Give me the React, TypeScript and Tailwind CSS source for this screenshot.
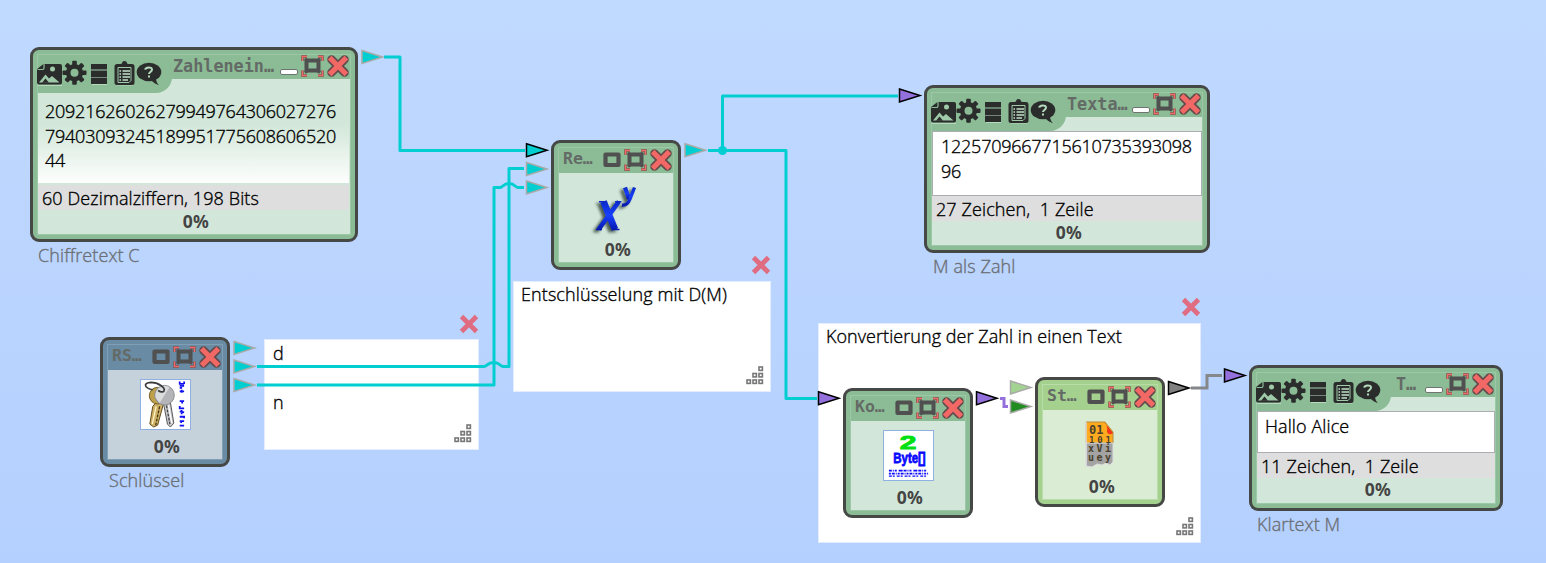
import React from "react";

type Tone = "green" | "blue" | "lime";

const shell: Record<Tone, string> = {
  green: "bg-[#8bbc95]",
  blue: "bg-[#698ba4]",
  lime: "bg-[#a5d18f]",
};
const inner: Record<Tone, string> = {
  green: "bg-[#d2e7d9]",
  blue: "bg-[#c6d2db]",
  lime: "bg-[#dbecd5]",
};
const rim: Record<Tone, string> = {
  green: "border-[#9bc9a6]",
  blue: "border-[#7f9fb6]",
  lime: "border-[#b9dda9]",
};

const UI = "font-['Open_Sans','Noto_Sans',sans-serif] font-light [-webkit-text-stroke:0.35px]";
const MONO = "font-['DejaVu_Sans_Mono',monospace]";
const PROSE = "text-[18px] tracking-[0.1px]";
const DIGITS = "text-[18px] tracking-[-0.24px]";

function FrameIcon() {
  return (
    <svg className="h-[22px] w-[23px] shrink-0" viewBox="0 0 23 22">
      <rect x="5.500" y="5.500" width="12" height="10" fill="none" stroke="#505050" strokeWidth="4" />
      <path d="M4 4l3 2M19 4l-3 2M4 17.500l3-2M19 17.500l-3-2" stroke="#505050" strokeWidth="3" />
      <path d="M1.500 6V1.500H6M17 1.500H21.500V6M1.500 15.500V20.500H6M17 20.500H21.500V15.500" fill="none" stroke="#7a4a4a" strokeWidth="2.400" />
      <path d="M1.500 6V1.500H6M17 1.500H21.500V6M1.500 15.500V20.500H6M17 20.500H21.500V15.500" fill="none" stroke="#f06a66" strokeWidth="1.300" />
    </svg>
  );
}

function CloseIcon() {
  return (
    <svg className="h-[22px] w-[22px] shrink-0" viewBox="0 0 22 22">
      <path d="M4.500 4.500L17.500 17.500M17.500 4.500L4.500 17.500" stroke="#634a4c" strokeWidth="8.500" strokeLinejoin="round" strokeLinecap="round" />
      <path d="M4.500 4.500L17.500 17.500M17.500 4.500L4.500 17.500" stroke="#f26865" strokeWidth="5.200" strokeLinecap="square" />
    </svg>
  );
}

function RestoreIcon() {
  return (
    <svg className="h-[16px] w-[18px] shrink-0" viewBox="0 0 18 16">
      <rect x="2.500" y="2.500" width="13" height="10.500" fill="none" stroke="#505050" strokeWidth="4.200" strokeLinejoin="round" />
    </svg>
  );
}

function ToolIcons() {
  return (
    <svg className="-ml-px h-[26px] w-[126px] shrink-0" viewBox="0 0 126 26">
      <g fill="none" stroke="#b6d8bd" strokeWidth="1" transform="translate(0 1)">
        <path d="M1 24.500H25M55 23.500H70M80 25H96" />
      </g>
      <path d="M0 9L6.500 4H23a2 2 0 0 1 2 2V22.500a2 2 0 0 1-2 2H2a2 2 0 0 1-2-2Z" fill="#2b2d2c" />
      <path d="M0.500 9.500H5.500a1.500 1.500 0 0 0 1.500-1.500V3.500" fill="none" stroke="#8bbc95" strokeWidth="1.200" />
      <circle cx="15.500" cy="9" r="2.500" fill="#9fc9a8" />
      <path d="M2 22.500L8.500 14.500 12 18.500 15 16 22.500 22.500Z" fill="#9fcaa9" />
      <path d="M5 22.800L8.500 18.500 12 22.800Z" fill="#2b2d2c" />
      <g transform="translate(37.500 12.700)" fill="#2b2d2c">
        {[0, 45, 90, 135, 180, 225, 270, 315].map((a) => (
          <rect key={a} x="-2.300" y="-12" width="4.600" height="7" rx="1" transform={`rotate(${a})`} />
        ))}
        <circle r="8.600" />
        <circle r="4" fill="#8bbc95" />
      </g>
      <path d="M54 4H70V9.500H54ZM54 10.500H70V17H54ZM54 18H70V24H54Z" fill="#2b2d2c" />
      <path d="M54 10H70M54 17.500H70" stroke="#72877a" strokeWidth="1" />
      <rect x="77.500" y="4" width="20" height="21" rx="2.500" fill="#2b2d2c" />
      <path d="M82 5.500V4.500L85 3.500a2.500 2.500 0 0 1 5 0L93 4.500V5.500Z" fill="#2b2d2c" />
      <path d="M81 7.500H94V20.500L92 22.500H81Z" fill="none" stroke="#9fcaa9" strokeWidth="1" />
      <path d="M82.500 11H84M85.500 11H93M82.500 14H84M85.500 14H93M82.500 17H84M85.500 17H93M82.500 20H84M85.500 20H91" stroke="#c2e0c9" strokeWidth="1.500" />
      <ellipse cx="112" cy="12" rx="12.300" ry="9.300" fill="#2b2d2c" />
      <path d="M111 19C115 20 117 24 122 25C119 22 119 20 119.500 17Z" fill="#2b2d2c" />
      <path d="M108.200 9.700C108.500 6.800 115 6.500 115 9.500C115 11.800 112 12 112 14M112 15.500V17.500" fill="none" stroke="#b5d9bd" strokeWidth="2" />
    </svg>
  );
}

function Percent({ className = "" }: { className?: string }) {
  return (
    <div className={`pl-[4px] text-center font-['Noto_Sans',sans-serif] text-[17.5px] leading-[23px] font-bold tracking-[0.3px] text-[#444] ${className}`}>0%</div>
  );
}

function SmallNode({ pos, tone, title, children }: { pos: string; tone: Tone; title: string; children: React.ReactNode }) {
  return (
    <section className={`absolute h-[130px] w-[130px] rounded-[9px] border-[3px] border-[#464846] p-[4px] ${shell[tone]} ${pos}`}>
      <div className={`flex h-full flex-col border ${rim[tone]}`}>
        <header className={`flex h-[25px] shrink-0 items-start ${shell[tone]}`}>
          <span className={`w-[44px] shrink-0 pl-[4px] pt-px ${MONO} text-[16.5px] leading-[20px] font-bold whitespace-nowrap text-[#646a66]`}>{title}</span>
          <span className="mt-[4px] flex"><RestoreIcon /></span>
          <span className="mt-px ml-[3px] flex gap-[3px]"><FrameIcon /><CloseIcon /></span>
        </header>
        <div className={`flex flex-1 flex-col items-center ${inner[tone]}`}>
          <div className="flex h-[66px] items-center justify-center pt-px">{children}</div>
          <Percent className="-mt-px" />
        </div>
      </div>
    </section>
  );
}

function WideNode({ pos, title, titleW, children }: { pos: string; title: string; titleW: string; children: React.ReactNode }) {
  return (
    <section className={`absolute rounded-[9px] border-[3px] border-[#464846] bg-[#8bbc95] p-[4px] ${pos}`}>
      <div className="flex h-full flex-col border border-[#9bc9a6] bg-[#d2e7d9]">
        <header className="flex h-[38px] shrink-0 items-start bg-[linear-gradient(#8bbc95_24px,#d2e7d9_24px)]">
          <div className="h-[38px] w-[134px] shrink-0 rounded-br-[16px] bg-[#8bbc95] pt-[5px]"><ToolIcons /></div>
          <span className={`shrink-0 ${titleW} ${MONO} text-[16.8px] leading-[22px] font-bold whitespace-nowrap text-[#646a66]`}>{title}</span>
          <div className="mr-px ml-auto flex">
            <span className="mt-[14px] mr-[3px] h-[6px] w-[18px] rounded-[2px] border border-[#6f7470] bg-white" />
            <span className="flex gap-[3px]"><FrameIcon /><CloseIcon /></span>
          </div>
        </header>
        {children}
      </div>
    </section>
  );
}

function StatusBar({ text, className = "" }: { text: string; className?: string }) {
  return (
    <div className={`h-[25px] shrink-0 bg-[#dedede] pl-[4px] ${UI} ${PROSE} leading-[27px] whitespace-pre text-black ${className}`}>{text}</div>
  );
}

function Note({ pos, children }: { pos: string; children: React.ReactNode }) {
  return (
    <section className={`absolute flex flex-col border border-[#e3edff] bg-white px-[7px] ${UI} ${PROSE} leading-[25px] text-black ${pos}`}>
      {children}
      <svg className="mt-auto mr-[-1px] mb-[6px] h-[19px] w-[18px] self-end" viewBox="0 0 18 19" fill="white" stroke="#777" strokeWidth="1.600">
        {[[13, 1], [7, 7.5], [13, 7.5], [1, 14], [7, 14], [13, 14]].map(([x, y]) => (
          <rect key={`${x}-${y}`} x={x} y={y} width="3.400" height="3.400" />
        ))}
      </svg>
    </section>
  );
}

function NoteClose({ pos }: { pos: string }) {
  return (
    <svg className={`absolute h-[20px] w-[20px] ${pos}`} viewBox="0 0 20 20">
      <path d="M2.500 2.500L17.500 17.500M17.500 2.500L2.500 17.500" stroke="#e06c82" strokeWidth="4.800" />
    </svg>
  );
}

function Caption({ pos, text }: { pos: string; text: string }) {
  return <div className={`absolute ${UI} ${PROSE} leading-[24px] whitespace-nowrap text-[#6b6f75] ${pos}`}>{text}</div>;
}

function Port({ x, y, fill, stroke }: { x: number; y: number; fill: string; stroke: string }) {
  return <path d={`M${x} ${y - 6.500}L${x + 20.500} ${y}L${x} ${y + 6.500}Z`} fill={fill} stroke={stroke} strokeWidth="1.500" />;
}

function Wires() {
  const teal = "#00ced1";
  const edge = "#a9aaa8";
  return (
    <svg className="pointer-events-none absolute inset-0 h-[563px] w-[1546px]" viewBox="0 0 1546 563" fill="none">
      <g stroke={teal} strokeWidth="3" strokeLinejoin="round">
        <path d="M384 57H400V150.500H525" />
        <path d="M257 366.500H484C487 366.500 487 362.500 494 362.500C500 362.500 500 366.500 503 366.500H509V168.500H524" />
        <path d="M257 385H494V187.500H500C503 187.500 503 183.500 509 183.500C515 183.500 515 187.500 518 187.500H524" />
        <path d="M708 150.500H786V398.500H817" />
        <path d="M722.500 150.500V96H898" />
      </g>
      <circle cx="722.500" cy="150.500" r="4.500" fill={teal} />
      <path d="M1000 398.500H1004V406.500H1008" stroke="#9370db" strokeWidth="3" />
      <path d="M1191 388H1207V375.500H1222" stroke="#85878a" strokeWidth="3" />
      <Port x={362} y={57} fill={teal} stroke={edge} />
      <Port x={526.500} y={150.300} fill={teal} stroke="#000" />
      <Port x={526.500} y={169} fill={teal} stroke={edge} />
      <Port x={526.500} y={187.500} fill={teal} stroke={edge} />
      <Port x={234} y={348} fill={teal} stroke={edge} />
      <Port x={234} y={366.500} fill={teal} stroke={edge} />
      <Port x={234} y={385} fill={teal} stroke={edge} />
      <Port x={685} y={150.300} fill={teal} stroke={edge} />
      <Port x={899.500} y={95.500} fill="#9370db" stroke="#000" />
      <Port x={818.500} y={398.300} fill="#9370db" stroke="#000" />
      <Port x={976.500} y={398.300} fill="#9370db" stroke="#000" />
      <Port x={1010.500} y={387.500} fill="#a3d391" stroke={edge} />
      <Port x={1010.500} y={406.500} fill="#228b22" stroke={edge} />
      <Port x={1168.500} y={388} fill="#808080" stroke="#000" />
      <Port x={1224.500} y={375.500} fill="#9370db" stroke="#000" />
    </svg>
  );
}

function KeysIcon() {
  return (
    <svg className="mt-[2px] h-[51px] w-[51px] border border-[#8fb0e0] bg-white" viewBox="0 0 50 50">
      <path d="M17 21L23 24 17 46 13 48 9 45 12 27Z" fill="#cfb266" stroke="#5f4b1b" strokeWidth="1" />
      <path d="M15.500 27L11.500 45" stroke="#fff3c8" strokeWidth="1.300" />
      <path d="M19 27L15 46" stroke="#4a3b18" strokeWidth="1.400" strokeDasharray="3 1.200" />
      <circle cx="17" cy="16" r="8.500" fill="#bfa04a" stroke="#6f5a22" strokeWidth="1" />
      <path d="M23 24L30 23 33.500 44 30 48 27 45Z" fill="#cccdd0" stroke="#555" strokeWidth="1" />
      <path d="M26 26L29.500 45" stroke="#444" strokeWidth="1.400" strokeDasharray="3 1.200" />
      <path d="M28 26L31.500 44" stroke="#fff" strokeWidth="1.200" />
      <circle cx="24" cy="15.500" r="10" fill="#b4b5b8" stroke="#8b8b8e" strokeWidth="1" />
      <path d="M15 18A9.500 9.500 0 0 1 29 7.500L19 23.500Z" fill="#dbdcde" />
      <path d="M12 10C3 8 2 3 10 2.500C18 2.500 25 8 23.500 11C22.500 13 19 12 17.500 10.500" fill="none" stroke="#3b3b3b" strokeWidth="1.700" />
      <path d="M39.500 1.500V4H44M44 1.500V4M39.500 6H44M39.500 8H42M39.500 11.500H44M41.500 10V13M39.500 21.500H44M42 21V24M39.500 26.500V29H44M39.500 32L44 33M41.500 30.500V35M39.500 37.500H44V39M39.500 42H44M41 41V44M39.500 46.500H44" fill="none" stroke="#1212f0" strokeWidth="1.800" />
    </svg>
  );
}

function PowerIcon() {
  return (
    <svg className="h-[52px] w-[46px] overflow-visible drop-shadow-[-3px_2px_1.500px_rgba(30,45,38,0.75)]" viewBox="0 0 46 52">
      <defs>
        <linearGradient id="ink" x1="0" y1="0" x2="0" y2="1">
          <stop offset="0" stopColor="#0a2bc8" />
          <stop offset="0.500" stopColor="#1840ff" />
          <stop offset="1" stopColor="#0619b0" />
        </linearGradient>
      </defs>
      <g fill="none" stroke="url(#ink)">
        <path d="M10.500 20.500L22 48.500" strokeWidth="6.800" />
        <path d="M26 20.500L5.500 48.500" strokeWidth="4.600" />
        <path d="M6 20.800H14M22 20.800H28.500M3 48.500H9M19 48.500H26.500" strokeWidth="1.500" />
        <path d="M32 6.500L36 18" strokeWidth="4.200" />
        <path d="M41.500 6.500L37 18C35 23 33 24.500 29 24" strokeWidth="3.400" />
      </g>
    </svg>
  );
}

function ByteIcon() {
  return (
    <svg className="mt-[2px] h-[51px] w-[51px] overflow-visible border border-[#8fb0e0] bg-white" viewBox="0 0 50 50" fontFamily="Liberation Sans, sans-serif" fontWeight="700">
      <text x="16" y="18.500" fontSize="19" textLength="17" lengthAdjust="spacingAndGlyphs" fill="#00e010" stroke="#00e010" strokeWidth="0.900">2</text>
      <text x="9.500" y="33" fontSize="15" textLength="33" lengthAdjust="spacingAndGlyphs" fill="#0808ff" stroke="#0808ff" strokeWidth="0.800">Byte[]</text>
      <path d="M5 40.500H45" stroke="#0808ff" strokeWidth="1.800" strokeDasharray="3 1 1 1 2 2 4 1" />
      <path d="M5 43.500H45" stroke="#0808ff" strokeWidth="2" strokeDasharray="2 1 3 1 1 1" />
      <path d="M5 46H45" stroke="#0808ff" strokeWidth="1.200" strokeDasharray="3 1 2 2" />
    </svg>
  );
}

function CodecIcon() {
  return (
    <svg className="h-[50px] w-[32px]" viewBox="0 0 32 50" fontFamily="DejaVu Sans Mono, monospace" fontWeight="700">
      <path d="M2 3H21L29 13V24H2Z" fill="#ffab1f" stroke="#b68a3a" strokeWidth="1" />
      <path d="M2 24H29V43L26 46 22 44 18 46 13 45 8 48 2 47Z" fill="#a3a3a3" stroke="#ddd" strokeWidth="1" />
      <path d="M20 3L29 14Q25 17 23 13Q24 6 20 3Z" fill="#f0341e" />
      <g fill="#4a412e" fontSize="12">
        <text x="5" y="15">01</text>
        <text x="5" y="23.500" fontSize="9" textLength="22">101</text>
        <text x="4" y="33" fontSize="10" textLength="23">xVi</text>
        <text x="4" y="42" fontSize="10" textLength="23">uey</text>
      </g>
      <path d="M2 3V47" stroke="#ddd" strokeWidth="1.500" />
    </svg>
  );
}

export default function App() {
  return (
    <main className="relative h-[563px] w-[1546px] overflow-hidden bg-linear-to-b from-[#c0d9ff] to-[#b4d0fe]">
      <Note pos="left-[264px] top-[339px] h-[111px] w-[215px]">
        <p className="pt-px pl-px">d</p>
        <p className="pt-[24px] pl-px">n</p>
      </Note>
      <Note pos="left-[513px] top-[281px] h-[111px] w-[258px]">
        <p>Entschlüsselung mit D(M)</p>
      </Note>
      <Note pos="left-[818px] top-[323px] h-[220px] w-[383px]">
        <p className="tracking-[0.05px]">Konvertierung der Zahl in einen Text</p>
      </Note>
      <NoteClose pos="left-[459px] top-[314px]" />
      <NoteClose pos="left-[751px] top-[255px]" />
      <NoteClose pos="left-[1181px] top-[297px]" />

      <WideNode pos="left-[30px] top-[47px] h-[195px] w-[328px]" title="Zahlenein…" titleW="w-[102px] pl-px">
        <div className={`mr-px h-[90px] shrink-0 bg-[linear-gradient(#d2e7d9_35%,#fdfefd)] pl-[7px] pt-[6px] ${UI} ${DIGITS} leading-[24.5px] text-black`}>
          <p>20921626026279949764306027276</p>
          <p>79403093245189951775608606520</p>
          <p>44</p>
        </div>
        <StatusBar className="mt-[2px] mr-px" text="60 Dezimalziffern, 198 Bits" />
        <Percent />
      </WideNode>
      <Caption pos="left-[38px] top-[243px]" text="Chiffretext C" />

      <SmallNode pos="left-[100px] top-[337px]" tone="blue" title="RS…"><KeysIcon /></SmallNode>
      <Caption pos="left-[109px] top-[468px]" text="Schlüssel" />

      <SmallNode pos="left-[551px] top-[140px]" tone="green" title="Re…"><PowerIcon /></SmallNode>

      <WideNode pos="left-[924px] top-[85px] h-[168px] w-[286px]" title="Texta…" titleW="w-[64px] pl-px">
        <div className={`h-[65px] shrink-0 border border-[#abadb3] bg-white px-[8px] pt-[2px] ${UI} ${DIGITS} leading-[25px] text-black`}>
          <p>1225709667715610735393098</p>
          <p>96</p>
        </div>
        <StatusBar text="27 Zeichen,  1 Zeile" />
        <Percent />
      </WideNode>
      <Caption pos="left-[933px] top-[254px]" text="M als Zahl" />

      <SmallNode pos="left-[843px] top-[388px]" tone="green" title="Ko…"><ByteIcon /></SmallNode>
      <SmallNode pos="left-[1035px] top-[377px]" tone="lime" title="St…"><CodecIcon /></SmallNode>

      <WideNode pos="left-[1249px] top-[365px] h-[146px] w-[254px]" title="T…" titleW="w-[26px] pl-[5px]">
        <div className={`h-[42px] shrink-0 border border-[#abadb3] bg-white px-[7px] pt-[2px] ${UI} ${PROSE} leading-[25px] text-black`}>Hallo Alice</div>
        <StatusBar text="11 Zeichen,  1 Zeile" />
        <Percent />
      </WideNode>
      <Caption pos="left-[1257px] top-[512px]" text="Klartext M" />

      <Wires />
    </main>
  );
}
